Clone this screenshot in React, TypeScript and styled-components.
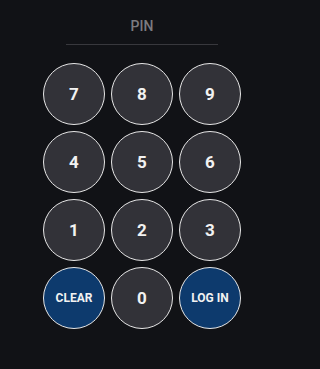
import styled, { createGlobalStyle } from "styled-components";

const GlobalStyle = createGlobalStyle`
  html, body {
    margin: 0;
    padding: 0;
    background: #111216;
  }
  body {
    font-family: Roboto, "Liberation Sans", Arial, sans-serif;
  }
`;

const Wrapper = styled.div`
  width: 280px;
  height: 369px;
  box-sizing: border-box;
  padding: 18px 0 0 4px;
  display: flex;
  flex-direction: column;
  align-items: center;
`;

const Label = styled.div`
  font-size: 14px;
  line-height: 16px;
  font-weight: 500;
  color: #7b7b80;
`;

const Divider = styled.div`
  width: 152px;
  height: 1px;
  background: #38383d;
  margin-top: 10px;
`;

const Pad = styled.div`
  margin-top: 18px;
  display: grid;
  grid-template-columns: repeat(3, 62px);
  gap: 6px;
`;

const Key = styled.button<{ $action?: boolean }>`
  width: 62px;
  height: 62px;
  box-sizing: border-box;
  border-radius: 50%;
  border: 1px solid #e6e6e6;
  background: ${(p) => (p.$action ? "#0d3a6d" : "#323238")};
  color: #f2f2f2;
  font-family: Roboto, "Liberation Sans", Arial, sans-serif;
  font-weight: 700;
  font-size: ${(p) => (p.$action ? "12px" : "17px")};
  display: flex;
  align-items: center;
  justify-content: center;
  padding: 0;
  cursor: pointer;
`;

const keys = ["7", "8", "9", "4", "5", "6", "1", "2", "3"];

export default function App() {
  return (
    <>
      <GlobalStyle />
      <Wrapper>
        <Label>PIN</Label>
        <Divider />
        <Pad>
          {keys.map((k) => (
            <Key key={k}>{k}</Key>
          ))}
          <Key $action>CLEAR</Key>
          <Key>0</Key>
          <Key $action>LOG IN</Key>
        </Pad>
      </Wrapper>
    </>
  );
}
